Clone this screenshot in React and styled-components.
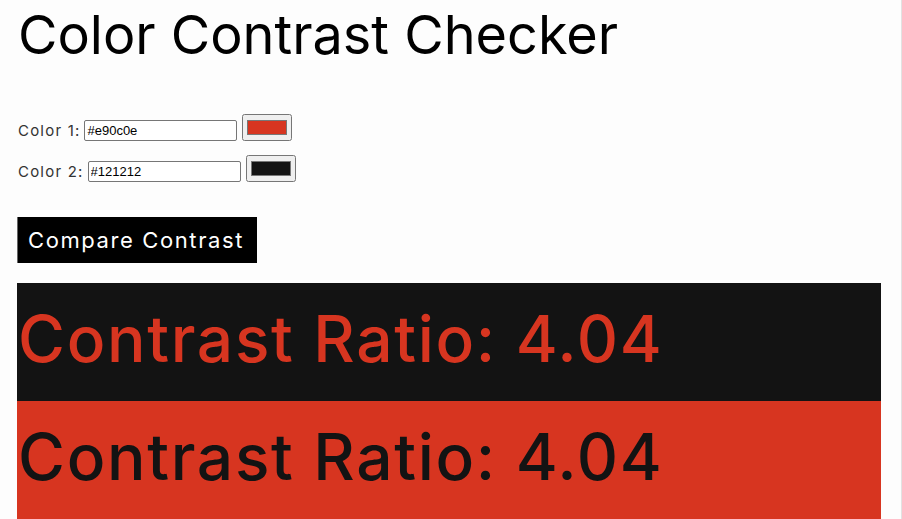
import React, { useState } from "react";
import styled, { createGlobalStyle } from "styled-components";

const Global = createGlobalStyle`
  html, body { margin: 0; padding: 0; background: #fdfdfd; }
  body { font-family: Inter, Roboto, "Liberation Sans", Arial, sans-serif; overflow: hidden; }
`;

const Page = styled.div`
  width: 864px;
  min-height: 519px;
  padding: 0 20px 0 17px;
  border-right: 1px solid #e2e2e2;
  display: flex;
  flex-direction: column;
`;

const Title = styled.h1`
  margin: 4px 0 0 1px;
  font-size: 54px;
  font-weight: 400;
  line-height: 62px;
  color: #000;
`;

const Form = styled.div`
  margin-top: 48px;
  display: flex;
  flex-direction: column;
  gap: 14px;
`;

const Row = styled.div`
  display: flex;
  align-items: flex-end;
  gap: 5px;
  padding-left: 1px;
`;

const Label = styled.label`
  font-size: 15px;
  color: #333;
  letter-spacing: 1.2px;
  display: flex;
  align-items: center;
  gap: 4px;
  line-height: 20px;
`;

const TextInput = styled.input`
  width: 153px;
  height: 21px;
  box-sizing: border-box;
  font-family: Arial, "Liberation Sans", sans-serif;
  font-size: 13px;
  letter-spacing: 0;
  padding: 1px 2px;
  border: 1px solid #767676;
  border-radius: 2px;
  background: #fff;
  color: #000;
`;

const Swatch = styled.input`
  width: 50px;
  height: 27px;
  margin: 0;
`;

const Button = styled.button`
  margin-top: 35px;
  align-self: flex-start;
  width: 240px;
  height: 46px;
  background: #000;
  color: #fff;
  font-family: inherit;
  font-size: 22px;
  letter-spacing: 1.6px;
  border: 0;
  border-left: 1px solid #666;
  padding: 0 0 0 10px;
  text-align: left;
`;

const Results = styled.div`
  margin-top: 20px;
  display: flex;
  flex-direction: column;
`;

const Result = styled.div`
  height: 118px;
  background: ${(p) => p.$bg};
  color: ${(p) => p.$fg};
  font-size: 64px;
  font-weight: 450;
  line-height: 66px;
  padding: 23px 0 0 1px;
  box-sizing: border-box;
  letter-spacing: 1.7px;
`;

export default function App() {
  const [c1, setC1] = useState("#e90c0e");
  const [c2, setC2] = useState("#121212");
  return (
    <>
      <Global />
      <Page>
        <Title>Color Contrast Checker</Title>
        <Form>
          <Row>
            <Label>
              Color 1:
              <TextInput value={c1} onChange={(e) => setC1(e.target.value)} />
            </Label>
            <Swatch type="color" value="#d73520" readOnly />
          </Row>
          <Row>
            <Label>
              Color 2:
              <TextInput value={c2} onChange={(e) => setC2(e.target.value)} />
            </Label>
            <Swatch type="color" value="#131313" readOnly />
          </Row>
        </Form>
        <Button>Compare Contrast</Button>
        <Results>
          <Result $bg="#131313" $fg="#d73520">Contrast Ratio: 4.04</Result>
          <Result $bg="#d73520" $fg="#131313">Contrast Ratio: 4.04</Result>
        </Results>
      </Page>
    </>
  );
}
